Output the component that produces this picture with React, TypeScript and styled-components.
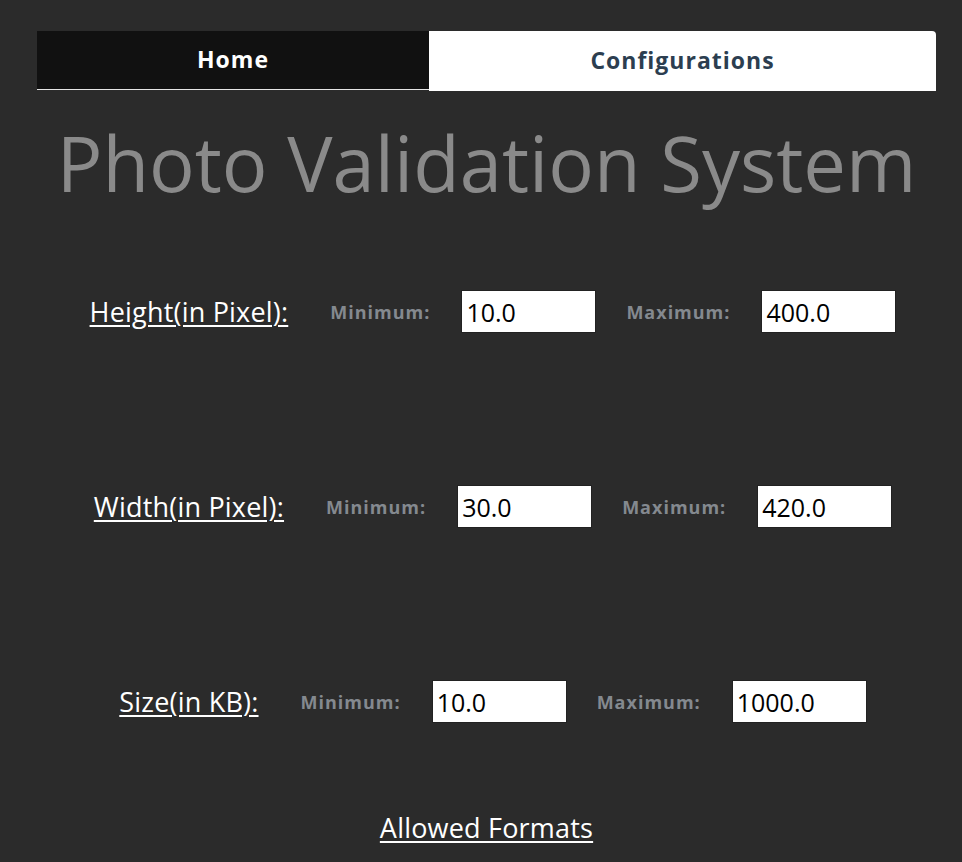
import React from "react";
import styled, { createGlobalStyle } from "styled-components";

const FONT = `"Open Sans", Lato, sans-serif`;

const Global = createGlobalStyle`
  html, body { margin: 0; padding: 0; background: #2b2b2b; }
  body { font-family: ${FONT}; }
`;

const Page = styled.div`
  padding: 31px 26px 0 37px;
  display: flex;
  flex-direction: column;
  min-height: 862px;
  box-sizing: border-box;
`;

const TabBar = styled.div`
  display: flex;
  align-items: flex-start;
`;

const Tab = styled.div<{ $active?: boolean }>`
  box-sizing: border-box;
  display: flex;
  align-items: center;
  justify-content: center;
  font-weight: 700;
  font-size: 23px;
  letter-spacing: 1px;
  padding-bottom: 3px;
  ${(p) =>
    p.$active
      ? `flex: 0 0 507px; height: 60px; background: #fff; color: #2c3e50; border-top-right-radius: 4px;`
      : `flex: 0 0 392px; height: 59px; background: #111111; color: #fff; border-bottom: 1px solid #e6e6e6;`}
`;

const Title = styled.h1`
  margin: 27px 0 0;
  text-align: center;
  font-size: 76px;
  font-weight: 400;
  line-height: 90px;
  color: #8a8a8a;
`;

const Rows = styled.div`
  display: flex;
  flex-direction: column;
  gap: 152px;
  margin-top: 82px;
  padding-left: 13px;
`;

const Row = styled.div`
  display: flex;
  align-items: center;
  justify-content: center;
  height: 43px;
`;

const FieldLabel = styled.span`
  color: #fff;
  font-size: 27px;
  letter-spacing: 0.2px;
  text-decoration: underline;
  text-decoration-thickness: 2px;
  text-underline-offset: 3px;
  margin-right: 42px;
`;

const Small = styled.span`
  color: #84898f;
  font-size: 18px;
  font-weight: 700;
  letter-spacing: 1px;
  margin-right: 31px;
`;

const Input = styled.input`
  box-sizing: border-box;
  width: 135px;
  height: 43px;
  border: 1px solid #222;
  background: #fff;
  color: #000;
  font-family: ${FONT};
  font-size: 25px;
  padding: 0 4px;
  margin-right: 30px;
  outline: none;
  &:last-child { margin-right: 0; }
`;

const Formats = styled.a`
  margin-top: 86px;
  align-self: center;
  color: #fff;
  font-size: 27px;
  letter-spacing: 0.2px;
  text-decoration: underline;
  text-decoration-thickness: 2px;
  text-underline-offset: 3px;
`;

const rows = [
  { label: "Height(in Pixel):", min: "10.0", max: "400.0" },
  { label: "Width(in Pixel):", min: "30.0", max: "420.0" },
  { label: "Size(in KB):", min: "10.0", max: "1000.0" },
];

export default function App() {
  return (
    <>
      <Global />
      <Page>
        <TabBar>
          <Tab>Home</Tab>
          <Tab $active>Configurations</Tab>
        </TabBar>
        <Title>Photo Validation System</Title>
        <Rows>
          {rows.map((r) => (
            <Row key={r.label}>
              <FieldLabel>{r.label}</FieldLabel>
              <Small>Minimum:</Small>
              <Input defaultValue={r.min} />
              <Small>Maximum:</Small>
              <Input defaultValue={r.max} />
            </Row>
          ))}
        </Rows>
        <Formats>Allowed Formats</Formats>
      </Page>
    </>
  );
}
